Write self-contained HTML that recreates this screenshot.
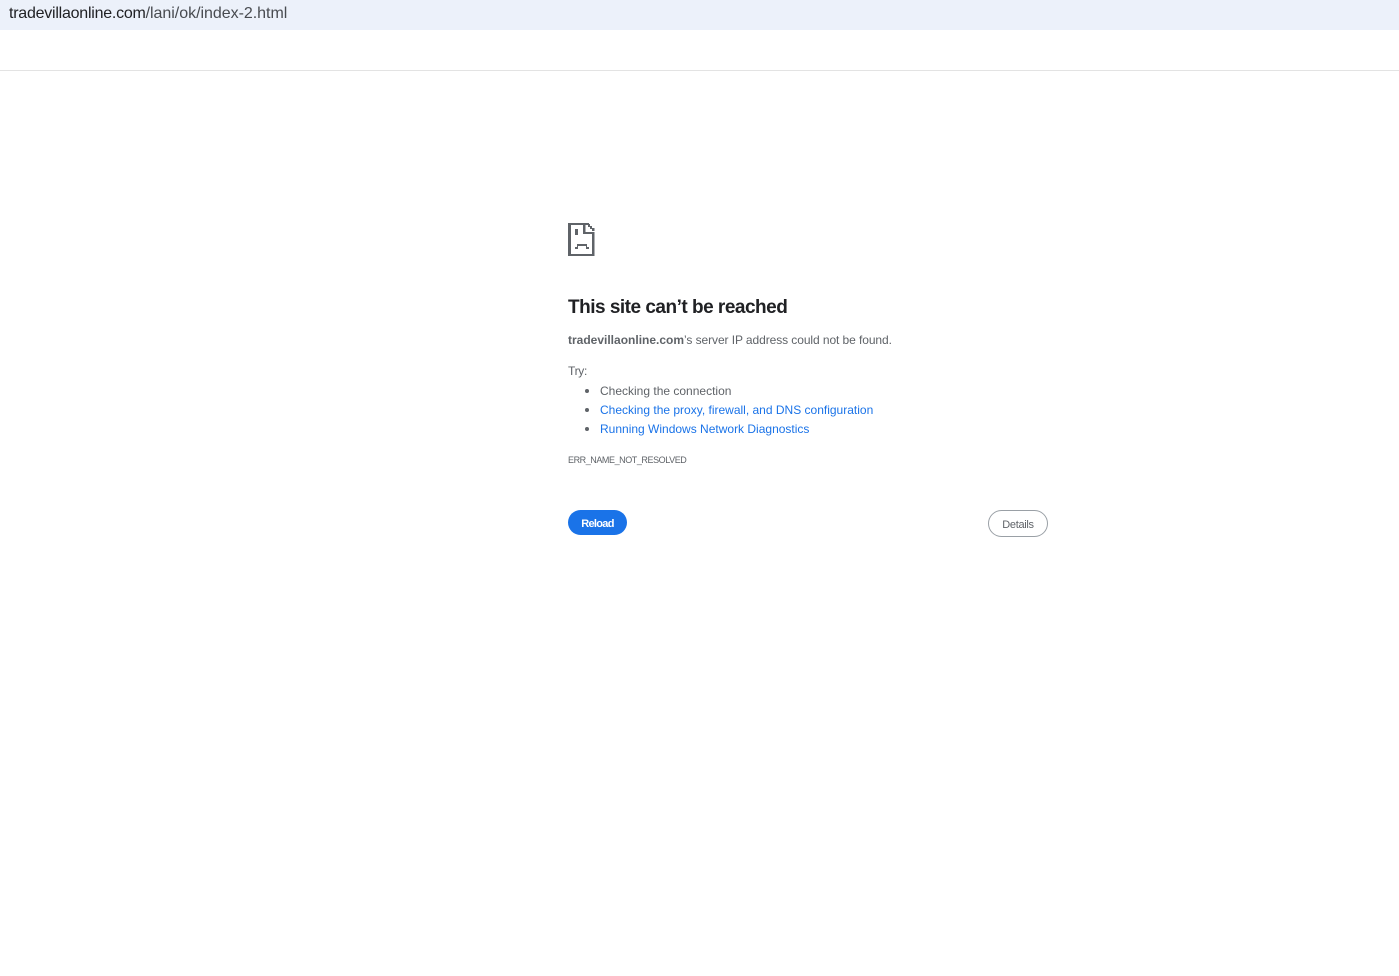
<!DOCTYPE html>
<html><head><meta charset="utf-8"><title>tradevillaonline.com</title>
<style>
html,body{margin:0;padding:0;background:#fff;width:1399px;height:976px;overflow:hidden}
body{position:relative;font-family:"Liberation Sans",sans-serif;color:#5f6368}
.t{position:absolute;white-space:nowrap;line-height:20px;height:20px}
.bar{position:absolute;left:0;top:0;width:1399px;height:30px;background:#ecf1fa}
.line{position:absolute;left:0;top:70px;width:1399px;height:1px;background:#e3e3e3}
a{color:#1a73e8;text-decoration:none}
.dot{position:absolute;left:585px;width:4px;height:4px;border-radius:50%;background:#5f6368}
.reload{position:absolute;left:568px;top:510px;width:59px;height:25px;border-radius:13px;background:#1a73e8;color:#fff;font-size:11px;font-weight:bold;line-height:28px;text-align:center;letter-spacing:-.7px}
.details{position:absolute;left:988px;top:510px;width:58px;height:25px;border:1px solid #9aa0a6;border-radius:14px;color:#5f6368;font-size:11px;line-height:28px;text-align:center;letter-spacing:-.3px}
</style></head><body>
<div class="bar"></div>
<div class="t" style="left:9px;top:3px;font-size:16px;line-height:21px;letter-spacing:-.03px;color:#484b50"><span style="color:#202124;letter-spacing:-.24px">tradevillaonline.com</span>/lani/ok/index-2.html</div>
<div class="line"></div>
<svg style="position:absolute;left:568px;top:223px" width="28" height="34" viewBox="0 0 28 34">
<path fill="#5f6368" d="M0 0H20V2H3V31H24V11H26.5V33H0Z"/>
<path fill="#5f6368" d="M15 0H17.5V9H26.5V11H15Z"/>
<path fill="#5f6368" d="M19 0H21V1H22V3H24V5H26.5V8H24V6H22V4H20V2H19Z"/>
<path fill="#5f6368" d="M7 6H10V12H7Z"/>
<path fill="#5f6368" d="M7 24H9V21H19V24H21V26H18V23H10V26H7Z"/>
</svg>
<div class="t" style="left:568px;top:298px;font-size:19px;font-weight:bold;color:#202124;letter-spacing:-.5px">This site can’t be reached</div>
<div class="t" style="left:568px;top:330px;font-size:12px"><b>tradevillaonline.com</b><span style="letter-spacing:-.08px">’s server IP address could not be found.</span></div>
<div class="t" style="left:568px;top:361px;font-size:12px;letter-spacing:-.3px">Try:</div>
<div class="dot" style="top:389px"></div>
<div class="t" style="left:600px;top:381px;font-size:12px">Checking the connection</div>
<div class="dot" style="top:408px"></div>
<div class="t" style="left:600px;top:400px;font-size:12px"><a href="#">Checking the proxy, firewall, and DNS configuration</a></div>
<div class="dot" style="top:427px"></div>
<div class="t" style="left:600px;top:419px;font-size:12px"><a href="#">Running Windows Network Diagnostics</a></div>
<div class="t" style="left:568px;top:450px;font-size:9px;letter-spacing:-.43px">ERR_NAME_NOT_RESOLVED</div>
<div class="reload">Reload</div>
<div class="details">Details</div>
</body></html>
